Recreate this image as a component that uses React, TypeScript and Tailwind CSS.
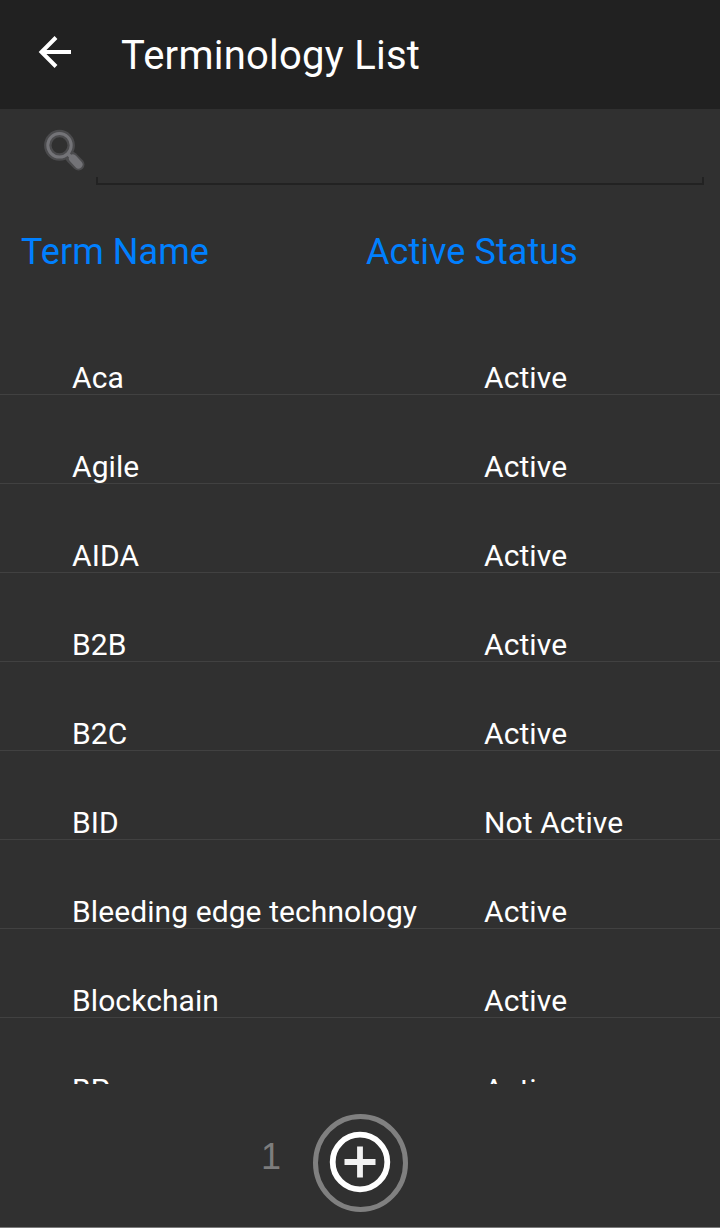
import React from "react";

const terms: [string, string][] = [
  ["Aca", "Active"],
  ["Agile", "Active"],
  ["AIDA", "Active"],
  ["B2B", "Active"],
  ["B2C", "Active"],
  ["BID", "Not Active"],
  ["Bleeding edge technology", "Active"],
  ["Blockchain", "Active"],
  ["BP", "Active"],
];

export default function App() {
  return (
    <div className="flex h-[1228px] w-[720px] flex-col overflow-hidden border-b border-[#7b7b7b] bg-[#303030] font-['Roboto',sans-serif] text-white">
      <header className="flex h-[109px] shrink-0 items-center bg-[#212121] pl-[38px]">
        <svg className="mb-[5px] h-[34px] w-[34px]" viewBox="0 0 34 34" fill="none" stroke="white" strokeWidth="4">
          <path d="M33 17H4M18 2.5L3.5 17L18 31.5" />
        </svg>
        <h1 className="ml-[49px] pt-[2px] text-[40px] leading-[48px] tracking-[0.24px]">Terminology List</h1>
      </header>
      <div className="flex h-[76px] shrink-0 pr-4 pl-[42px]">
        <svg className="mt-[19px] h-[44px] w-[44px] shrink-0" viewBox="0 0 44 44" fill="none" strokeLinecap="round">
          <g stroke="#4b4b4d">
            <circle cx="17.5" cy="17.3" r="11.7" strokeWidth="7.5" />
            <path d="M29.5 29.5L36.5 36.5" strokeWidth="12" />
          </g>
          <g stroke="#737377">
            <circle cx="17.5" cy="17.3" r="11.7" strokeWidth="3" />
            <path d="M26 26L30 30" strokeWidth="3.5" />
            <path d="M31 30.5L36.5 36.5" strokeWidth="8" />
          </g>
        </svg>
        <div className="ml-[10px] flex grow flex-col justify-end">
          <div className="h-[8px] border-2 border-t-0 border-[#222222]" />
        </div>
      </div>
      <div className="flex h-[121px] shrink-0 pt-[43px] pl-[21px] text-[36px] leading-[48px] tracking-[0.06px] text-[#0080ff]">
        <div className="w-[345px]">Term Name</div>
        <div>Active Status</div>
      </div>
      <div className="h-[778px] shrink-0 overflow-hidden">
        {terms.map(([name, status]) => (
          <div key={name} className="flex h-[89px] items-end border-b border-[#414141] pl-[72px] text-[30px] leading-[32px] tracking-[0.09px]">
            <div className="w-[412px]">{name}</div>
            <div>{status}</div>
          </div>
        ))}
      </div>
      <footer className="flex grow items-start pt-[30px] pl-[261px]">
        <div className="w-[52px] pt-[19px] font-['Liberation_Sans',sans-serif] text-[36px] leading-[48px] text-[#7d7d7d]">1</div>
        <svg className="h-[98px] w-[95px]" viewBox="0 0 95 98" fill="none">
          <ellipse cx="47.5" cy="49" rx="45" ry="46.5" stroke="#808080" strokeWidth="5" />
          <circle cx="47" cy="48" r="27.3" stroke="white" strokeWidth="5.8" />
          <path d="M47 32.5V63.5M31.5 48H62.5" stroke="#f2f2f2" strokeWidth="5.8" />
        </svg>
      </footer>
    </div>
  );
}
